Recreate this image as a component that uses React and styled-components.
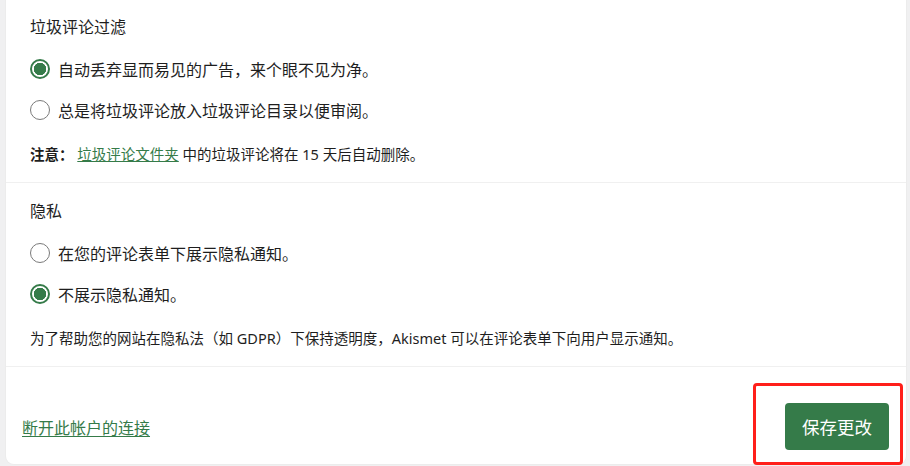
import React, {useState} from 'react';
import styled, {createGlobalStyle} from 'styled-components';

const GlobalStyle = createGlobalStyle`
  html, body {
    margin: 0;
    padding: 0;
    background: #f0f0f1;
  }
  body {
    font-family: "Noto Sans", "Noto Sans CJK SC", sans-serif;
    color: #1e1e1e;
  }
`

const Page = styled.div`
  padding: 0 4px 2px 6px;
`

const Card = styled.div`
  background: #fff;
  border-radius: 0 0 8px 8px;
  box-shadow: 0 0 0 1px #ececec;
`

const Section = styled.section`
  padding: ${p => (p.$first ? '15px' : '16px')} 24px 18px;
  border-top: ${p => (p.$first ? 'none' : '1px solid #f0f0f0')};
`

const Title = styled.h3`
  margin: 0;
  font-size: 16px;
  line-height: 24px;
  font-weight: 400;
`

const Options = styled.div`
  display: flex;
  flex-direction: column;
  gap: 17px;
  margin-top: 18px;
`

const Option = styled.label`
  display: flex;
  align-items: center;
  gap: 8px;
  height: 24px;
  font-size: 16px;
  cursor: pointer;
`

const Radio = styled.input.attrs({type: 'radio'})`
  appearance: none;
  margin: 0;
  width: 20px;
  height: 20px;
  border-radius: 50%;
  box-sizing: border-box;
  border: ${p => (p.checked ? '2px solid #357b49' : '1.5px solid #7a7a7a')};
  background: ${p => (p.checked ? 'radial-gradient(circle, #357b49 0 6px, #fff 6.5px)' : '#fff')};
  flex-shrink: 0;
`

const Note = styled.p`
  margin: 22px 0 0;
  font-size: 14.5px;
  line-height: 20px;

  strong {
    font-weight: 700;
  }
`

const InlineLink = styled.a`
  color: #357b49;
  text-decoration: underline;
`

const Footer = styled.div`
  position: relative;
  display: flex;
  justify-content: space-between;
  align-items: center;
  padding: 36px 17px 14px 16px;
  border-top: 1px solid #f0f0f0;
`

const Disconnect = styled.a`
  font-size: 16px;
  color: #357b49;
  text-decoration: underline;
  text-underline-offset: 2px;
`

const SaveButton = styled.button`
  height: 47px;
  padding: 0 17px;
  border: none;
  border-radius: 4px;
  background: #357b49;
  color: #fff;
  font-family: inherit;
  font-size: 17.5px;
  cursor: pointer;
`

const Highlight = styled.div`
  position: absolute;
  top: 16px;
  right: 3px;
  width: 150px;
  height: 82px;
  box-sizing: border-box;
  border: 3px solid #ff1f1a;
  border-radius: 4px;
  pointer-events: none;
`

function RadioGroup({name, options, value, onChange}) {
    return (
        <Options>
            {options.map(opt => (
                <Option key={opt.value}>
                    <Radio
                        name={name}
                        checked={value === opt.value}
                        onChange={() => onChange(opt.value)}
                    />
                    <span>{opt.label}</span>
                </Option>
            ))}
        </Options>
    )
}

export default function App() {
    const [spam, setSpam] = useState('discard')
    const [privacy, setPrivacy] = useState('hide')

    return (
        <Page>
            <GlobalStyle/>
            <Card>
                <Section $first>
                    <Title>垃圾评论过滤</Title>
                    <RadioGroup
                        name="strictness"
                        value={spam}
                        onChange={setSpam}
                        options={[
                            {value: 'discard', label: '自动丢弃显而易见的广告，来个眼不见为净。'},
                            {value: 'folder', label: '总是将垃圾评论放入垃圾评论目录以便审阅。'},
                        ]}
                    />
                    <Note>
                        <strong>注意：</strong> <InlineLink href="#">垃圾评论文件夹</InlineLink> 中的垃圾评论将在 15 天后自动删除。
                    </Note>
                </Section>
                <Section>
                    <Title>隐私</Title>
                    <RadioGroup
                        name="privacy"
                        value={privacy}
                        onChange={setPrivacy}
                        options={[
                            {value: 'show', label: '在您的评论表单下展示隐私通知。'},
                            {value: 'hide', label: '不展示隐私通知。'},
                        ]}
                    />
                    <Note>为了帮助您的网站在隐私法（如 GDPR）下保持透明度，Akismet 可以在评论表单下向用户显示通知。</Note>
                </Section>
                <Footer>
                    <Disconnect href="#">断开此帐户的连接</Disconnect>
                    <SaveButton>保存更改</SaveButton>
                    <Highlight/>
                </Footer>
            </Card>
        </Page>
    );
}
